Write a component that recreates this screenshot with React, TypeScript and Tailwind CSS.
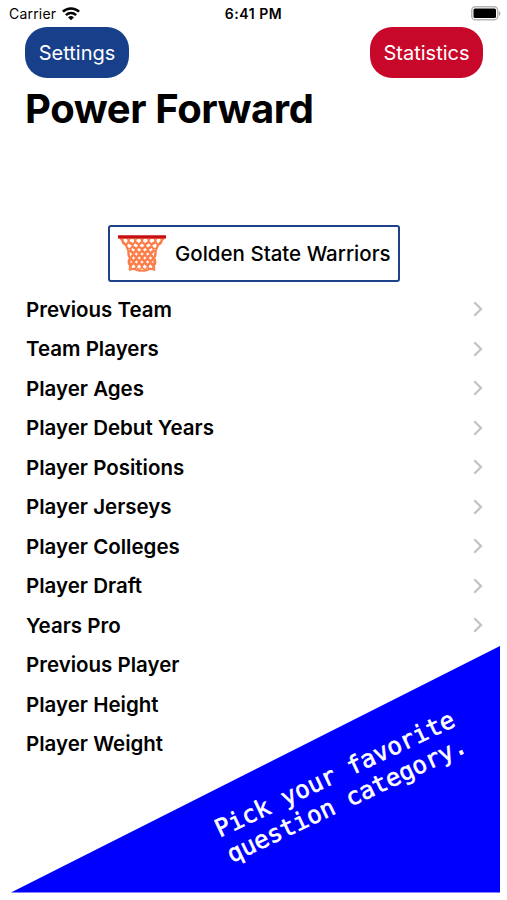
const categories = [
  { label: "Previous Team", open: true },
  { label: "Team Players", open: true },
  { label: "Player Ages", open: true },
  { label: "Player Debut Years", open: true },
  { label: "Player Positions", open: true },
  { label: "Player Jerseys", open: true },
  { label: "Player Colleges", open: true },
  { label: "Player Draft", open: true },
  { label: "Years Pro", open: true },
  { label: "Previous Player", open: false },
  { label: "Player Height", open: false },
  { label: "Player Weight", open: false },
]

// loops of the net, top to bottom: y, spacing between loops, number of loops
const netRows = [
  { y: 6, gap: 6.7, count: 6 },
  { y: 10.5, gap: 6.3, count: 5 },
  { y: 15, gap: 5.9, count: 4 },
  { y: 19, gap: 5.7, count: 5 },
  { y: 23, gap: 5.6, count: 4 },
  { y: 27, gap: 5.6, count: 5 },
  { y: 31, gap: 5.7, count: 4 },
]

function WifiIcon() {
  return (
    <svg width="18" height="14" viewBox="0 0 18 14" fill="none" stroke="#000" strokeWidth="2.5">
      <path d="M0.9 4.7a11.6 11.6 0 0 1 16.2 0" />
      <path d="M3.9 8.1a7.3 7.3 0 0 1 10.2 0" />
      <path d="M9 13.3 6.1 10.4a4.1 4.1 0 0 1 5.8 0Z" fill="#000" stroke="none" />
    </svg>
  )
}

function BatteryIcon() {
  return (
    <svg width="30" height="15" viewBox="0 0 30 15">
      <rect x="0.75" y="0.75" width="26" height="13" rx="3.6" fill="#fff" stroke="#b5b5b5" strokeWidth="1.5" />
      <rect x="2.5" y="2.5" width="22.5" height="9.5" rx="1.5" fill="#000" />
      <path d="M28 4.9c1.9.8 1.9 4 0 4.8Z" fill="#a8a8a8" />
    </svg>
  )
}

function HoopIcon() {
  return (
    <svg width="48" height="37" viewBox="0 0 48 37" fill="none" stroke="#fc7d48" strokeWidth="1.4" strokeLinejoin="round" strokeLinecap="round">
      <path d="M2 3C9 10 13 18 11.6 35L16 33.5Q20 37 24 35.5 28 37 32 33.5L36.4 35C35 18 39 10 46 3" strokeWidth="1.8" />
      {netRows.map((row) =>
        Array.from({ length: row.count }, (_, i) => (
          <ellipse
            key={`${row.y}-${i}`}
            cx={24 + (i - (row.count - 1) / 2) * row.gap}
            cy={row.y}
            rx={row.gap / 2 - 0.3}
            ry={3.2}
          />
        ))
      )}
      <path d="M0 1.9h48" stroke="#c80f14" strokeWidth="3.4" strokeLinecap="butt" />
    </svg>
  )
}

function Chevron() {
  return (
    <svg width="10" height="16" viewBox="0 0 10 16" fill="none" stroke="#c3c3c5" strokeWidth="2.3">
      <path d="M1.3 1.2 8 8 1.3 14.8" />
    </svg>
  )
}

function StatusBar() {
  return (
    <div className="grid h-[27px] grid-cols-3 items-center px-[8px] text-[14px]">
      <div className="flex items-center gap-[6px] pl-px">
        <span className="tracking-[0.2px]">Carrier</span>
        <WifiIcon />
      </div>
      <span className="text-center font-semibold tracking-[0.55px]">6:41 PM</span>
      <div className="-mr-[2px] flex justify-end">
        <BatteryIcon />
      </div>
    </div>
  )
}

export default function App() {
  return (
    <div className="relative h-[900px] w-[507px] overflow-hidden bg-white font-['Inter',sans-serif] text-black">
      <StatusBar />
      <div className="flex justify-between pl-[25px] pr-[24px] text-[20px] text-white">
        <button className="h-[51px] w-[104px] rounded-[22px] bg-[#173f8a]">Settings</button>
        <button className="h-[51px] w-[113px] rounded-[22px] bg-[#c8082b]">Statistics</button>
      </div>
      <h1 className="mt-[6px] pl-[25px] text-[40px] leading-[50px] font-bold tracking-[-0.4px]">Power Forward</h1>

      <div className="mt-[91px] ml-[108px] flex h-[57px] w-[292px] items-center rounded-[3px] border-2 border-[#1d428a] pl-[8px]">
        <HoopIcon />
        <span className="mt-[2px] ml-[9px] text-[20.5px] font-medium whitespace-nowrap">Golden State Warriors</span>
      </div>

      <ul className="mt-[7.5px] pl-[26px] pr-[24px]">
        {categories.map((category) => (
          <li key={category.label} className="flex h-[39.52px] items-center justify-between text-[20.5px] font-semibold">
            <span className="pt-[1.5px]">{category.label}</span>
            {category.open && <Chevron />}
          </li>
        ))}
      </ul>

      <div className="absolute top-[646px] left-[11px] h-[246.5px] w-[489px] bg-[#0000ff] [clip-path:polygon(0_100%,100%_0,100%_100%)]" />
      <p className="absolute top-[760px] left-[210px] w-[262px] -rotate-[25.3deg] font-['DejaVu_Sans_Mono',monospace] text-[24.2px] leading-[27.5px] whitespace-nowrap text-white [-webkit-text-stroke:0.6px_#fff]">
        Pick your favorite
        <br />
        question category.
      </p>
    </div>
  )
}
